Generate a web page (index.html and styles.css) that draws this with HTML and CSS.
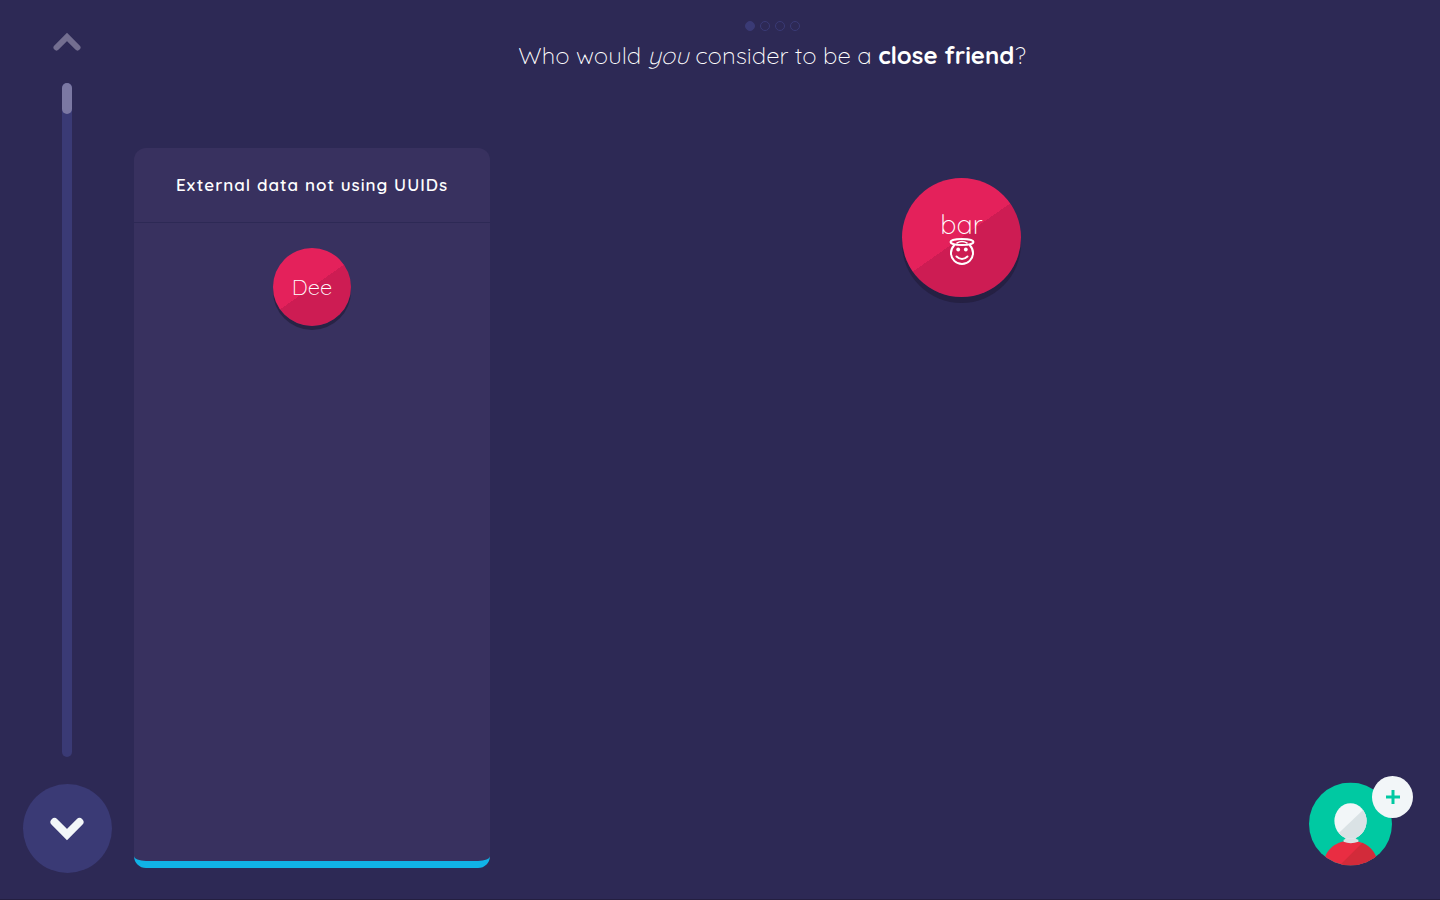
FILE: index.html
```
<!DOCTYPE html>
<html lang="en">
<head>
<meta charset="utf-8">
<meta name="viewport" content="width=device-width, initial-scale=1">
<title>Close friends</title>
<link rel="stylesheet" href="styles.css">
</head>
<body>
<div class="session">
  <nav class="timeline" aria-label="Interview progress">
    <button class="nav-back" type="button" aria-label="Back">
      <svg width="28" height="19" viewBox="0 0 28 19"><path d="M3.500 15.500 14 5 24.500 15.500" fill="none" stroke="currentColor" stroke-width="6" stroke-linecap="round" stroke-linejoin="miter"/></svg>
    </button>
    <div class="track"><div class="track-fill"></div></div>
    <button class="nav-next" type="button" aria-label="Next">
      <svg width="34" height="24" viewBox="0 0 34 24"><path d="M4.500 5 17 17.500 29.500 5" fill="none" stroke="currentColor" stroke-width="8" stroke-linecap="round" stroke-linejoin="miter"/></svg>
    </button>
  </nav>
  <main class="stage">
    <header class="prompt">
      <div class="dots"><span class="dot dot-active"></span><span class="dot"></span><span class="dot"></span><span class="dot"></span></div>
      <h1 class="question">Who would <em>you</em> consider to be a <strong>close friend</strong>?</h1>
    </header>
    <div class="columns">
      <section class="panel">
        <h2 class="panel-title">External data not using UUIDs</h2>
        <div class="panel-body"><button class="node node-small" type="button">Dee</button></div>
      </section>
      <section class="node-list">
        <button class="node node-large" type="button">
          <span>bar</span>
          <svg class="angel" width="26" height="28" viewBox="0 0 26 28" fill="none" stroke="currentColor" stroke-width="2" stroke-linecap="round">
            <ellipse cx="13" cy="4" rx="11.500" ry="3"/>
            <path d="M5 7.500A11 11 0 1 0 21 7.500"/>
            <path d="M8 5Q13 2 18 5" stroke-width="1.500"/>
            <path d="M7.500 18.500Q13 23.500 18.500 18.500"/>
            <circle cx="9.200" cy="11.500" r="1.900" fill="currentColor" stroke="none"/>
            <circle cx="16.800" cy="11.500" r="1.900" fill="currentColor" stroke="none"/>
          </svg>
        </button>
      </section>
    </div>
  </main>
</div>
<button class="add-person" type="button" aria-label="Add a person">
  <svg class="person" viewBox="0 0 84 84">
    <defs>
      <clipPath id="disc"><circle cx="42" cy="42" r="42"/></clipPath>
      <clipPath id="shade"><path d="M24 57 64 19V84H24Z"/></clipPath>
    </defs>
    <g clip-path="url(#disc)">
      <rect width="84" height="84" fill="#00c9a2"/>
      <path d="M14 84C16 67 28 59 42 59S68 67 70 84Z" fill="#e92d42"/>
      <path d="M54 61C63 65 69 73 70 84H31Z" fill="#d22b3a"/>
      <path d="M37 54H47V56Q48 58 50 58V60Q42 63 35 60V58Q37 58 37 55Z" fill="#dae2e5"/>
      <ellipse cx="42" cy="39" rx="16.300" ry="18" fill="#f2f6f8"/>
      <ellipse cx="42" cy="39" rx="16.300" ry="18" fill="#dae2e5" clip-path="url(#shade)"/>
    </g>
  </svg>
  <span class="badge"><svg width="14" height="14" viewBox="0 0 14 14"><path d="M7 0V14M0 7H14" stroke="#00c9a2" stroke-width="3"/></svg></span>
</button>
</body>
</html>
```
FILE: styles.css
```
* { box-sizing: border-box; }
body {
  margin: 0;
  background: #2d2955;
  color: #fff;
  font-family: Quicksand, Lato, sans-serif;
}
button {
  border: 0;
  padding: 0;
  background: none;
  color: inherit;
  font: inherit;
  cursor: pointer;
}
svg { display: block; }
.session {
  display: flex;
  min-height: 100vh;
  border-bottom: 1px solid #241f40;
}
.timeline {
  flex: none;
  width: 134px;
  display: flex;
  flex-direction: column;
  align-items: center;
  padding: 32px 0 26px;
}
.nav-back { color: #736e90; }
.track {
  flex: 1;
  width: 10px;
  margin: 32px 0 27px;
  border-radius: 5px;
  background: #3a3a75;
}
.track-fill {
  height: 31px;
  border-radius: 5px;
  background: #7b78a3;
}
.nav-next {
  display: grid;
  place-items: center;
  width: 89px;
  height: 89px;
  border-radius: 50%;
  background: #3a3a75;
  color: #f2f6f8;
}
.stage {
  flex: 1;
  display: flex;
  flex-direction: column;
  padding: 21px 30px 31px 0;
}
.prompt {
  display: flex;
  flex-direction: column;
  align-items: center;
  min-height: 127px;
}
.dots { display: flex; gap: 5px; }
.dot {
  width: 10px;
  height: 10px;
  border: 1px solid #3a3a75;
  border-radius: 50%;
}
.dot-active { background: #3a3a75; }
.question {
  margin: 8px 0 0;
  font-size: 24px;
  line-height: 32px;
  font-weight: 300;
}
.question strong { font-weight: 700; }
.columns {
  flex: 1;
  display: flex;
  gap: 23px;
}
.panel {
  flex: 0 1 356px;
  display: flex;
  flex-direction: column;
  border-radius: 12px;
  border-bottom: 7px solid #10b2e6;
  background: #38315f;
}
.panel-title {
  margin: 0;
  padding: 24px 16px;
  border-bottom: 1px solid #2d2955;
  font-size: 17px;
  line-height: 26px;
  font-weight: 600;
  letter-spacing: 1px;
  text-align: center;
}
.panel-body {
  display: flex;
  justify-content: center;
  padding: 25px;
}
.node-list {
  flex: 1;
  display: flex;
  justify-content: center;
  align-items: flex-start;
  padding-top: 30px;
}
.node {
  display: flex;
  flex-direction: column;
  align-items: center;
  justify-content: center;
  border-radius: 50%;
  background: linear-gradient(145deg, #e4215b 50%, #cd1c53 50%);
  font-weight: 300;
}
.node-small {
  width: 78px;
  height: 78px;
  box-shadow: 0 4px #282345;
  font-size: 22px;
}
.node-large {
  width: 119px;
  height: 119px;
  box-shadow: 0 6px #252043;
  font-size: 27px;
  line-height: 28px;
}
.add-person {
  position: fixed;
  right: 48px;
  bottom: 34px;
  width: 83px;
  height: 84px;
}
.person { width: 100%; height: 100%; }
.badge {
  position: absolute;
  top: -6px;
  right: -21px;
  display: grid;
  place-items: center;
  width: 41px;
  height: 42px;
  border-radius: 50%;
  background: #f2f6f8;
}
```
